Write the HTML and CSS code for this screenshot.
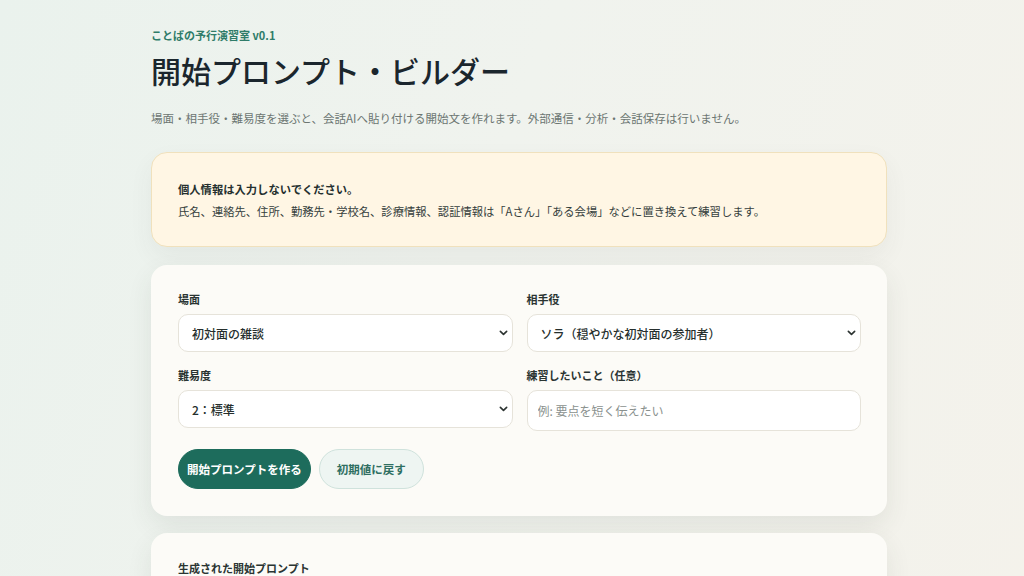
FILE: index.html
```html
<!DOCTYPE html>
<html lang="ja">
<head>
<meta charset="utf-8">
<title>開始プロンプト・ビルダー</title>
<link rel="stylesheet" href="styles.css">
</head>
<body>
<main class="page">
  <header class="hero">
    <p class="eyebrow">ことばの予行演習室 v0.1</p>
    <h1 class="title">開始プロンプト・ビルダー</h1>
    <p class="lead">場面・相手役・難易度を選ぶと、会話AIへ貼り付ける開始文を作れます。外部通信・分析・会話保存は行いません。</p>
  </header>

  <section class="notice">
    <p class="notice-title">個人情報は入力しないでください。</p>
    <p class="notice-body">氏名、連絡先、住所、勤務先・学校名、診療情報、認証情報は「Aさん」「ある会場」などに置き換えて練習します。</p>
  </section>

  <section class="card form-card">
    <div class="grid">
      <label class="field">
        <span class="label">場面</span>
        <span class="select-wrap">
          <select class="control">
            <option>初対面の雑談</option>
          </select>
          <svg class="chevron" viewBox="0 0 10 6" aria-hidden="true"><path d="M1.5 1.2 5 4.6 8.5 1.2"/></svg>
        </span>
      </label>
      <label class="field">
        <span class="label">相手役</span>
        <span class="select-wrap">
          <select class="control">
            <option>ソラ（穏やかな初対面の参加者）</option>
          </select>
          <svg class="chevron" viewBox="0 0 10 6" aria-hidden="true"><path d="M1.5 1.2 5 4.6 8.5 1.2"/></svg>
        </span>
      </label>
      <label class="field">
        <span class="label">難易度</span>
        <span class="select-wrap">
          <select class="control">
            <option>2：標準</option>
          </select>
          <svg class="chevron" viewBox="0 0 10 6" aria-hidden="true"><path d="M1.5 1.2 5 4.6 8.5 1.2"/></svg>
        </span>
      </label>
      <label class="field">
        <span class="label">練習したいこと（任意）</span>
        <input class="control input" type="text" placeholder="例: 要点を短く伝えたい">
      </label>
    </div>
    <div class="actions">
      <button class="btn btn-primary" type="button">開始プロンプトを作る</button>
      <button class="btn btn-secondary" type="button">初期値に戻す</button>
    </div>
  </section>

  <section class="card output-card">
    <h2 class="output-title">生成された開始プロンプト</h2>
  </section>
</main>
</body>
</html>
```

FILE: styles.css
```css
* {
  box-sizing: border-box;
}

html, body {
  margin: 0;
  padding: 0;
}

body {
  min-height: 100vh;
  font-family: "Noto Sans CJK JP", "Noto Sans", sans-serif;
  color: #1f2a2e;
  background: linear-gradient(110deg, #eaf2ed 0%, #f0f3ee 45%, #f4f2eb 100%);
}

.page {
  box-sizing: content-box;
  max-width: 736px;
  margin: 0 auto;
  padding: 27px 0 0 14px;
}

.hero p, .hero h1, .notice p, h2 {
  margin: 0;
}

.eyebrow {
  font-size: 11px;
  line-height: 16px;
  font-weight: 700;
  color: #2f7c69;
}

.title {
  margin-top: 9px !important;
  font-size: 30px;
  line-height: 36px;
  font-weight: 500;
  color: #1b262d;
}

.lead {
  margin-top: 21px !important;
  font-size: 11.5px;
  line-height: 18px;
  color: #6c7672;
}

.notice {
  margin-top: 25px;
  padding: 25px 26px 24px;
  background: #fff6e4;
  border: 1px solid #f0e1bd;
  border-radius: 16px;
  box-shadow: 0 10px 24px rgba(60, 70, 60, 0.06);
}

.notice-title {
  font-size: 11.3px;
  line-height: 22px;
  font-weight: 700;
  color: #25302f;
}

.notice-body {
  font-size: 11.3px;
  line-height: 22px;
  color: #353e3c;
}

.card {
  background: #fcfbf7;
  border-radius: 16px;
  box-shadow: 0 10px 26px rgba(60, 70, 60, 0.09);
}

.form-card {
  margin-top: 18px;
  padding: 26px 26px 27px 27px;
}

.grid {
  display: grid;
  grid-template-columns: 1fr 1fr;
  column-gap: 14px;
  row-gap: 15px;
}

.field {
  display: flex;
  flex-direction: column;
  gap: 7px;
}

.label {
  font-size: 11px;
  line-height: 16px;
  font-weight: 700;
  color: #2a3432;
}

.select-wrap {
  position: relative;
  display: block;
}

.select-wrap .control {
  width: 100%;
  appearance: none;
  -webkit-appearance: none;
}

.chevron {
  position: absolute;
  right: 5px;
  top: 16px;
  width: 9px;
  height: 6px;
  fill: none;
  stroke: #2c3331;
  stroke-width: 1.8;
  stroke-linecap: round;
  stroke-linejoin: round;
  pointer-events: none;
}

.control {
  height: 38px;
  padding: 0 20px 0 13px;
  font-family: inherit;
  font-size: 12px;
  font-weight: 500;
  color: #262f2d;
  background-color: #ffffff;
  border: 1px solid #e6e3da;
  border-radius: 10px;
}

.input {
  height: 41px;
  padding-left: 10px;
  font-weight: 400;
}

.input::placeholder {
  color: #8a918e;
}

.actions {
  display: flex;
  gap: 8px;
  margin-top: 18px;
}

.btn {
  height: 40px;
  font-family: inherit;
  font-size: 11.5px;
  font-weight: 700;
  border-radius: 999px;
  cursor: pointer;
}

.btn-primary {
  padding: 0 8px;
  color: #ffffff;
  background: #1d6c5c;
  border: 1px solid #1d6c5c;
}

.btn-secondary {
  padding: 0 17px;
  color: #2f6f62;
  background: #eef5f2;
  border: 1px solid #cfe2dc;
}

.output-card {
  margin-top: 17px;
  padding: 27px 27px 30px;
}

.output-title {
  font-size: 11px;
  line-height: 16px;
  font-weight: 700;
  color: #2a3432;
}
```
